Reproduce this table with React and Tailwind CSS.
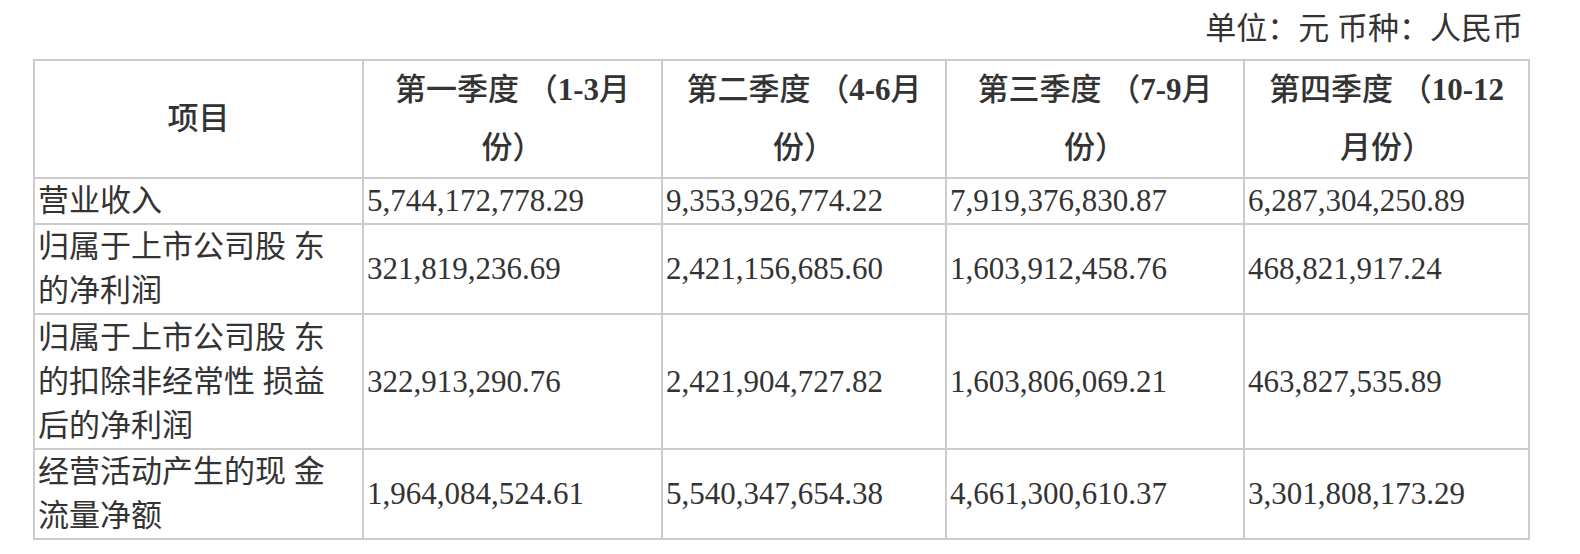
const ROWS = [
  {
    label: ['营业收入'],
    h: 'h-[46px]',
    values: ['5,744,172,778.29', '9,353,926,774.22', '7,919,376,830.87', '6,287,304,250.89'],
  },
  {
    label: ['归属于上市公司股 东', '的净利润'],
    h: 'h-[89px]',
    values: ['321,819,236.69', '2,421,156,685.60', '1,603,912,458.76', '468,821,917.24'],
  },
  {
    label: ['归属于上市公司股 东', '的扣除非经常性 损益', '后的净利润'],
    h: 'h-[135px]',
    values: ['322,913,290.76', '2,421,904,727.82', '1,603,806,069.21', '463,827,535.89'],
  },
  {
    label: ['经营活动产生的现 金', '流量净额'],
    h: 'h-[90px]',
    values: ['1,964,084,524.61', '5,540,347,654.38', '4,661,300,610.37', '3,301,808,173.29'],
  },
]

// [cjk, latin (bold), cjk] for line one, then line two
const HEADS = [
  [['第一季度 （', '1-3', '月'], '份）'],
  [['第二季度 （', '4-6', '月'], '份）'],
  [['第三季度 （', '7-9', '月'], '份）'],
  [['第四季度 （', '10-12', ''], '月份）'],
]

const cell = "border-2 border-[#cccccc] px-[3px] align-middle"

function Lines({ lines }) {
  return lines.map((l, i) => (
    <span key={i}>
      {i > 0 && <br />}
      {l}
    </span>
  ))
}

export default function App() {
  return (
    <div className="w-[1580px] h-[554px] bg-white text-[#333333] text-[31px] font-['Liberation_Serif','Noto_Sans_CJK_SC',serif]">
      <div className="pl-[33px] w-[1528px]">
        <div className="h-[59px] pt-[7px] pr-[5px] text-right leading-[44px] whitespace-nowrap">
          单位：元 币种：人民币
        </div>
        <table className="table-fixed border-collapse w-[1495px] leading-[44px]">
          <colgroup>
            <col className="w-[329px]" />
            <col className="w-[299px]" />
            <col className="w-[284px]" />
            <col className="w-[298px]" />
            <col className="w-[285px]" />
          </colgroup>
          <thead>
            <tr className="h-[114px]">
              <th className={cell + " text-center font-medium leading-[58px]"}>项目</th>
              {HEADS.map(([first, second], i) => (
                <th key={i} className={cell + " text-center font-medium leading-[58px] whitespace-nowrap"}>
                  {first[0]}<span className="font-bold">{first[1]}</span>{first[2]}
                  <br />
                  {second}
                </th>
              ))}
            </tr>
          </thead>
          <tbody>
            {ROWS.map((r, i) => (
              <tr key={i} className={r.h}>
                <td className={cell + " whitespace-nowrap"}>
                  <Lines lines={r.label} />
                </td>
                {r.values.map((v, j) => (
                  <td key={j} className={cell + " whitespace-nowrap"}>{v}</td>
                ))}
              </tr>
            ))}
          </tbody>
        </table>
      </div>
    </div>
  )
}
